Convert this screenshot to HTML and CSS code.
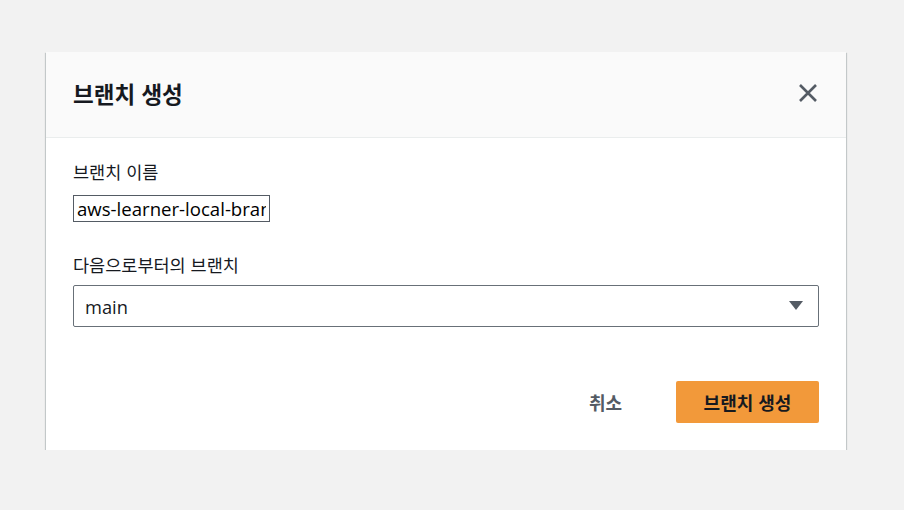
FILE: index.html
```html
<!DOCTYPE html>
<html lang="ko">
<head>
<meta charset="utf-8">
<link rel="stylesheet" href="styles.css">
</head>
<body>
<div class="page">
  <div class="modal">
    <div class="modal-header">
      <h2 class="title">브랜치 생성</h2>
      <button class="close" aria-label="닫기">
        <svg width="20" height="20" viewBox="0 0 20 20"><path d="M2 2 L18 18 M18 2 L2 18" stroke="#545b64" stroke-width="2.6" fill="none"/></svg>
      </button>
    </div>
    <div class="modal-body">
      <label class="label">브랜치 이름</label>
      <input class="text-input" type="text" value="aws-learner-local-branch">
      <label class="label label-2">다음으로부터의 브랜치</label>
      <div class="select">
        <span class="select-value">main</span>
        <svg class="caret" width="14" height="10" viewBox="0 0 14 10"><path d="M0 0 H14 L7 9 Z" fill="#545b64"/></svg>
      </div>
    </div>
    <div class="modal-footer">
      <button class="btn btn-link">취소</button>
      <button class="btn btn-primary">브랜치 생성</button>
    </div>
  </div>
</div>
</body>
</html>
```

FILE: styles.css
```css
html, body {
  margin: 0;
  padding: 0;
  background: #f2f2f2;
  font-family: "Open Sans", "Noto Sans CJK KR", sans-serif;
  color: #16191f;
}
.page {
  padding: 52px 0 0 46px;
}
.modal {
  width: 800px;
  background: #fff;
  box-shadow: 0 1px 1px 0 rgba(0,28,36,0.3), 1px 1px 1px 0 rgba(0,28,36,0.15), -1px 1px 1px 0 rgba(0,28,36,0.15);
}
.modal-header {
  box-sizing: border-box;
  background: #fafafa;
  border-bottom: 1px solid #eaeded;
  display: flex;
  align-items: center;
  justify-content: space-between;
  padding: 0 28px 0 27px;
  height: 86px;
}
.title {
  margin: 0;
  font-size: 22.5px;
  font-weight: 700;
  line-height: 28px;
  margin-top: -4px;
  font-family: "Noto Sans CJK KR", sans-serif;
}
.close {
  border: 0;
  background: none;
  padding: 0;
  width: 20px;
  height: 20px;
  display: flex;
  margin-top: -4px;
}
.modal-body {
  padding: 23px 27px 0 27px;
  display: flex;
  flex-direction: column;
  align-items: flex-start;
}
.label {
  font-size: 17.5px;
  line-height: 22px;
  font-family: "Noto Sans CJK KR", sans-serif;
}
.text-input {
  margin-top: 12px;
  width: 197px;
  height: 27px;
  box-sizing: border-box;
  border: 1px solid #545b64;
  border-radius: 0;
  padding: 0 3px;
  font-family: "Open Sans", sans-serif;
  font-size: 18.6px;
  color: #000;
  outline: none;
}
.label-2 {
  margin-top: 32px;
}
.select {
  margin-top: 9px;
  width: 746px;
  height: 42px;
  box-sizing: border-box;
  border: 1px solid #687078;
  border-radius: 2px;
  display: flex;
  align-items: center;
  justify-content: space-between;
  padding: 0 15px 0 11px;
}
.select-value {
  font-size: 18.3px;
  font-family: "Open Sans", sans-serif;
  color: #16191f;
}
.modal-footer {
  display: flex;
  justify-content: flex-end;
  align-items: center;
  gap: 20px;
  padding: 54px 27px 27px 27px;
}
.btn {
  height: 42px;
  box-sizing: border-box;
  border: 0;
  border-radius: 2px;
  font-family: "Noto Sans CJK KR", sans-serif;
  font-size: 18px;
  font-weight: 700;
  padding: 0 20px;
  cursor: pointer;
}
.btn-link {
  background: none;
  color: #545b64;
  padding: 0 34px 0 20px;
}
.btn-primary {
  width: 143px;
  background: #f2993a;
  color: #16191f;
}
```
